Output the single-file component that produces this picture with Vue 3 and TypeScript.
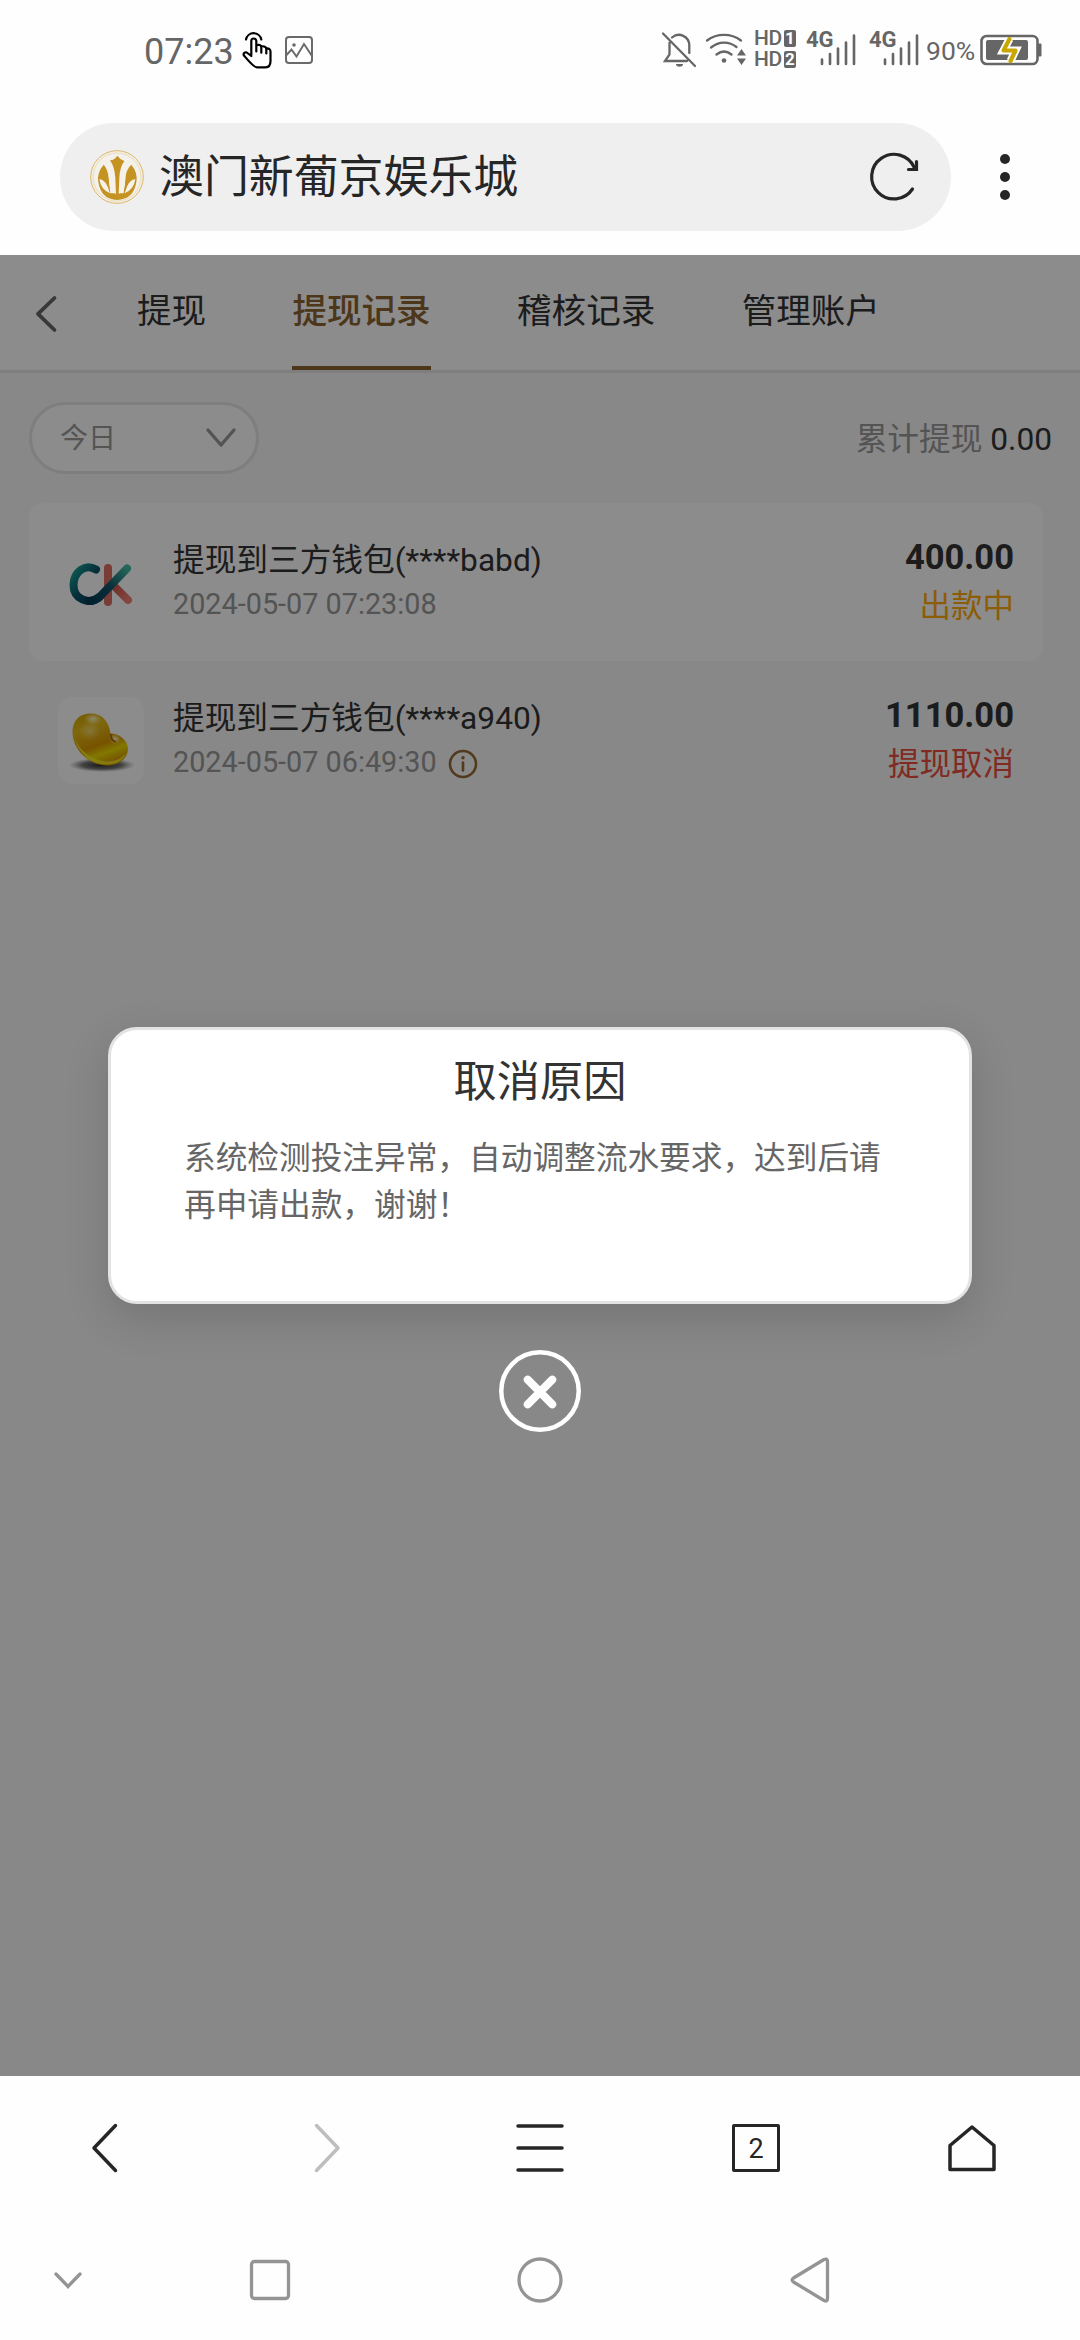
<script setup lang="ts">
interface WithdrawRecord {
  id: number
  icon: 'ck' | 'bean'
  title: string
  time: string
  amount: string
  status: string
  tone: 'pending' | 'cancelled'
  hasReason: boolean
}

const tabs: string[] = ['提现', '提现记录', '稽核记录', '管理账户']
const activeTab = 1

const records: WithdrawRecord[] = [
  { id: 1, icon: 'ck', title: '提现到三方钱包(****babd)', time: '2024-05-07 07:23:08', amount: '400.00', status: '出款中', tone: 'pending', hasReason: false },
  { id: 2, icon: 'bean', title: '提现到三方钱包(****a940)', time: '2024-05-07 06:49:30', amount: '1110.00', status: '提现取消', tone: 'cancelled', hasReason: true },
]
</script>

<template>
  <div class="screen">
    <header class="status-bar">
      <div class="status-left">
        <span class="clock">07:23</span>
        <svg class="hand" width="31" height="38" viewBox="0 0 31 38" fill="none" stroke="#000" stroke-width="2.2" stroke-linejoin="round" stroke-linecap="round">
          <path d="M4 8.5a7.8 7.8 0 0 1 15.3 0" />
          <path d="M9.3 24V10a2.5 2.5 0 0 1 5 0v10.500M14.300 14.200c2.600-1 5 0 5 2v5.500M19.300 15.500c2.600-.8 5 .5 5 2.500v4.500M24.300 17.500c2.800-.3 4.200 1 4.200 3V30c0 4-2 6.300-5 6.300h-8.500C11.500 36.300 7 30.500 1.800 24.300 1 22 3.500 20.300 5.500 22l3.800 3" />
        </svg>
        <svg class="photo" width="30" height="30" viewBox="0 0 30 30" fill="none" stroke="#6a6a6a" stroke-width="2">
          <rect x="2" y="2" width="26" height="26" rx="3" />
          <path d="M2.500 20l5-5.500 5 7 7.500-12.500 8 12" />
          <circle cx="10" cy="10" r="1.800" fill="#6a6a6a" stroke="none" />
        </svg>
      </div>
      <div class="status-right">
        <svg class="bell" width="36" height="38" viewBox="0 0 36 38" fill="none" stroke="#666" stroke-width="2.300" stroke-linecap="round">
          <path d="M2 2.500L34 35M11 6.500c7-6 17.300-1 17.300 8V22M8.500 12v11.500L4 30h22" />
          <path d="M15 33h7a3.500 2.800 0 0 1-7 0z" fill="#666" stroke="none" />
        </svg>
        <svg class="wifi" width="42" height="36" viewBox="0 0 42 36" fill="none" stroke="#666" stroke-width="2.300" stroke-linecap="round">
          <path d="M2 8.500C12 1 26 1 36 8.500M6 15.500c8-6.500 18-6.500 25.500-.5M11.500 22.500c5-4 10-4 15 0" />
          <circle cx="19" cy="28.500" r="2.300" fill="#666" stroke="none" />
          <path d="M32 23.500h9L36.500 17zM32 26.500h9L36.500 33z" fill="#666" stroke="none" />
        </svg>
        <div class="hd">
          <div class="hd-row">HD<b>1</b></div>
          <div class="hd-row">HD<b>2</b></div>
        </div>
        <div v-for="n in 2" :key="n" class="signal">
          <span class="gen">4G</span>
          <svg class="bars" width="37" height="34" viewBox="0 0 37 34" stroke="#666" stroke-width="2.600" stroke-linecap="round">
            <path d="M3 26.500v4.500M11 21v10M19 15.500V31M27 9.500V31M35 2.500V31" />
          </svg>
        </div>
        <span class="percent">90%</span>
        <svg class="battery" width="62" height="32" viewBox="0 0 62 32">
          <rect x="1.500" y="2" width="56" height="28" rx="5" fill="none" stroke="#666" stroke-width="2.600" />
          <path d="M58 9.500h2.500q1 0 1 1v11q0 1-1 1H58z" fill="#666" />
          <rect x="6" y="6" width="42" height="20" rx="2" fill="#666" />
          <path d="M29.500 5L23.500 16.500h12L30.500 27" fill="none" stroke="#fff" stroke-width="8" />
          <path d="M29.500 5L23.500 16.500h12L30.500 27" fill="none" stroke="#c8a800" stroke-width="4.200" stroke-linejoin="round" stroke-linecap="round" />
        </svg>
      </div>
    </header>

    <div class="address-bar">
      <div class="address-field">
        <svg class="site-logo" width="54" height="54" viewBox="150 120 162 162">
          <circle cx="231" cy="201" r="79" fill="#f3efe6" stroke="#ddb96a" stroke-width="3" />
          <circle cx="231" cy="201" r="72" fill="#f4f1ea" stroke="#e6d2a4" stroke-width="2" />
          <path fill="#c49322" d="M191 164q-21 24-16 52 8 52 56 54 50-2 58-54 5-28-15-52-16 14-18 40l-5 46h-40l-5-46q-2-26-15-40z" />
          <path fill="#f6f2ea" d="M178 207q20 0 32 43-28-12-32-43zM286 207q-20 0-32 43 28-12 32-43zM205 172q22 20 25 80-19-2-22-30zM258 172q-22 20-25 80 19-2 22-30z" />
          <path fill="#c49322" d="M210 151q15-2 22-14 8 12 21 16-14 20-15 50l-2 50h-8l-2-50q-2-32-16-52z" />
        </svg>
        <span class="site-name">澳门新葡京娱乐城</span>
        <svg class="reload" width="54" height="54" viewBox="0 0 54 54" fill="none" stroke="#262626" stroke-width="3.200" stroke-linecap="round">
          <path d="M45.500 39a22.300 22.300 0 1 1 1.800-21.500" />
          <path d="M49.500 11.500v8h-8" stroke-width="3.200" />
        </svg>
      </div>
      <svg class="kebab" width="12" height="50" viewBox="0 0 12 50" fill="#262626">
        <circle cx="6" cy="7" r="5" /><circle cx="6" cy="25" r="5" /><circle cx="6" cy="43" r="5" />
      </svg>
    </div>

    <main class="page">
      <nav class="tab-bar">
        <svg class="back" width="24" height="38" viewBox="0 0 24 38" fill="none" stroke="#666" stroke-width="3.800" stroke-linecap="round" stroke-linejoin="round">
          <path d="M20.500 3L4 18.800 20.500 35" />
        </svg>
        <span v-for="(tab, i) in tabs" :key="tab" class="tab" :class="{ active: i === activeTab }">{{ tab }}</span>
      </nav>

      <section class="filters">
        <div class="select">
          <span>今日</span>
          <svg width="32" height="22" viewBox="0 0 32 22" fill="none" stroke="#999" stroke-width="3.400" stroke-linecap="round" stroke-linejoin="round">
            <path d="M3 3l13 15L29 3" />
          </svg>
        </div>
        <div class="total"><span>累计提现</span> 0.00</div>
      </section>

      <ul class="records">
        <li v-for="record in records" :key="record.id" class="record">
          <div class="record-icon">
            <svg v-if="record.icon === 'ck'" width="86" height="87" viewBox="0 0 86 87" fill="none" stroke-linecap="round">
              <defs>
                <linearGradient id="ckC" x1="0" y1="0" x2="1" y2="1">
                  <stop offset="0" stop-color="#17a596" /><stop offset=".5" stop-color="#0b5267" /><stop offset="1" stop-color="#053e59" />
                </linearGradient>
                <linearGradient id="ckStroke" x1="1" y1="0" x2="0" y2="1">
                  <stop offset="0" stop-color="#42bba5" /><stop offset=".5" stop-color="#14566a" /><stop offset="1" stop-color="#043b55" />
                </linearGradient>
                <linearGradient id="ckLeg" x1="0" y1="0" x2="1" y2="1">
                  <stop offset="0" stop-color="#c7544b" /><stop offset="1" stop-color="#ef8175" />
                </linearGradient>
              </defs>
              <path d="M50 29v34" stroke="#df6d65" stroke-width="8" />
              <path d="M55 46l15 15" stroke="url(#ckLeg)" stroke-width="8" />
              <path d="M38 30.500C27 24 15.500 33 15.500 46c0 14 15 20.500 26 12" stroke="url(#ckC)" stroke-width="8" />
              <path d="M69 29.500L43 56.500q-5 5.500-12 5.500" stroke="url(#ckStroke)" stroke-width="8" />
            </svg>
            <svg v-else width="86" height="87" viewBox="0 0 86 87">
              <defs>
                <linearGradient id="bean" x1=".1" y1="0" x2=".5" y2="1">
                  <stop offset="0" stop-color="#d6a500" /><stop offset=".3" stop-color="#e6bd1b" /><stop offset=".65" stop-color="#d99700" /><stop offset=".82" stop-color="#eddc00" /><stop offset="1" stop-color="#d89d00" />
                </linearGradient>
                <radialGradient id="beanGlow"><stop offset="0" stop-color="#fff8ce" /><stop offset="1" stop-color="#fff0a0" stop-opacity="0" /></radialGradient>
                <radialGradient id="beanShadow"><stop offset="0" stop-color="#111" stop-opacity=".9" /><stop offset=".6" stop-color="#333" stop-opacity=".65" /><stop offset="1" stop-color="#666" stop-opacity="0" /></radialGradient>
              </defs>
              <ellipse cx="44" cy="68" rx="33" ry="7" fill="url(#beanShadow)" />
              <path d="M31 16.500c12-1 20 7 21.500 20 8 0 17 6 17.500 15C70 62 60 68.500 49 68.500 28 68 14 50 14.500 34 15 23 22 17 31 16.500z" fill="url(#bean)" />
              <path d="M16.500 40C21 55 37 64.500 50 64.500c8 0 15-4 18-9-2 8-9 12-19 12C32 67 19 55 16.500 40z" fill="#f7ee22" opacity=".8" />
              <ellipse cx="32" cy="34" rx="11" ry="10" fill="url(#beanGlow)" opacity=".45" />
              <ellipse cx="35" cy="22" rx="9" ry="6" fill="url(#beanGlow)" />
              <ellipse cx="57" cy="42" rx="6" ry="5" fill="url(#beanGlow)" />
              <path d="M53 37q-1 6 5 8" stroke="#b16600" stroke-width="1.500" fill="none" />
            </svg>
          </div>
          <div class="record-info">
            <div class="record-title">{{ record.title }}</div>
            <div class="record-time">
              <span>{{ record.time }}</span>
              <svg v-if="record.hasReason" width="30" height="30" viewBox="0 0 30 30" fill="none" stroke="#956c34" stroke-width="2.600">
                <circle cx="15" cy="15" r="13" />
                <path d="M15 13.500v8" stroke-linecap="round" />
                <circle cx="15" cy="8.800" r="1.700" fill="#956c34" stroke="none" />
              </svg>
            </div>
          </div>
          <div class="record-result">
            <div class="amount">{{ record.amount }}</div>
            <div class="state" :class="record.tone">{{ record.status }}</div>
          </div>
        </li>
      </ul>

      <div class="overlay">
        <div class="dialog">
          <h2>取消原因</h2>
          <p>系统检测投注异常，自动调整流水要求，达到后请再申请出款，谢谢！</p>
        </div>
        <svg class="close" width="84" height="84" viewBox="0 0 84 84" fill="none" stroke="#fff" stroke-linecap="round">
          <circle cx="42" cy="42" r="38.700" stroke-width="4.500" />
          <path d="M29.700 30.700l24.600 24.600M54.300 30.700L29.700 55.300" stroke-width="8" />
        </svg>
      </div>
    </main>

    <nav class="browser-bar">
      <div class="cell">
        <svg width="50" height="50" viewBox="0 0 50 50"><path d="M32.500 2.500L11 25l21.500 22.500" /></svg>
      </div>
      <div class="cell disabled">
        <svg width="50" height="50" viewBox="0 0 50 50"><path d="M17.500 2.500L39 25 17.500 47.500" /></svg>
      </div>
      <div class="cell">
        <svg width="50" height="50" viewBox="0 0 50 50"><path d="M3 3h44M3 25h44M3 47h44" /></svg>
      </div>
      <div class="cell"><span class="tab-count">2</span></div>
      <div class="cell">
        <svg width="50" height="50" viewBox="0 0 50 50"><path d="M3 46.500V22.500L25 4l22 18.500v24z" /></svg>
      </div>
    </nav>

    <nav class="system-bar">
      <svg class="hide" width="32" height="48" viewBox="0 0 32 48"><path d="M4 18l12 12.500L28 18" stroke-linecap="round" /></svg>
      <svg class="recent" width="48" height="48" viewBox="0 0 48 48"><rect x="5.500" y="5.500" width="37" height="37" rx="3" /></svg>
      <svg class="home" width="48" height="48" viewBox="0 0 48 48"><circle cx="24" cy="24" r="21" /></svg>
      <svg class="return" width="48" height="48" viewBox="0 0 48 48"><path d="M38 3.500L7.500 22q-2.800 2 0 4L38 44.500q3.500 1.500 3.500-2v-37q0-3.500-3.500-2z" /></svg>
    </nav>
  </div>
</template>

<style>
body {
  margin: 0;
  background: #fff;
}
</style>

<style scoped>
.screen {
  display: flex;
  flex-direction: column;
  width: 1080px;
  height: 2340px;
  overflow: hidden;
  background: #fefefe;
  font-family: Roboto, "Noto Sans CJK SC", sans-serif;
}

svg {
  display: block;
  flex: none;
}

.status-bar {
  display: flex;
  justify-content: space-between;
  box-sizing: border-box;
  height: 102px;
  padding: 0 38px 2px 144px;
  color: #666;
}

.status-left,
.status-right {
  display: flex;
  align-items: center;
}

.clock {
  width: 91px;
  font-size: 36px;
  line-height: 42px;
  margin-top: 4px;
}

.hand {
  margin-left: 7px;
}

.photo {
  margin-left: 11px;
}

.wifi {
  margin-left: 8px;
}

.hd {
  display: flex;
  flex-direction: column;
  gap: 4px;
  width: 42px;
  margin-top: -2px;
  margin-left: 7px;
}

.hd-row {
  display: flex;
  justify-content: space-between;
  align-items: center;
  height: 17px;
  font-size: 21px;
  font-weight: 500;
  line-height: 17px;
  letter-spacing: -0.500px;
}

.hd-row b {
  width: 12px;
  border-radius: 2px;
  background: #666;
  color: #fff;
  font-size: 17px;
  letter-spacing: 0;
  text-align: center;
}

.signal {
  display: flex;
  align-items: flex-start;
  width: 50px;
  margin-left: 10px;
}

.signal + .signal {
  margin-left: 13px;
}

.gen {
  width: 27px;
  margin-top: -1px;
  margin-right: -14px;
  font-size: 22px;
  font-weight: 700;
  line-height: 16px;
}

.percent {
  width: 48px;
  margin-left: 7px;
  margin-top: 2px;
  font-size: 26.500px;
  line-height: 32px;
}

.battery {
  margin-left: 6px;
}

.address-bar {
  display: flex;
  align-items: center;
  box-sizing: border-box;
  height: 153px;
  padding: 0 69px 3px 60px;
  justify-content: space-between;
}

.address-field {
  display: flex;
  align-items: center;
  box-sizing: border-box;
  width: 891px;
  height: 108px;
  padding: 0 30px;
  border-radius: 54px;
  background: #efefef;
}

.site-name {
  flex: 1;
  margin-top: 2px;
  margin-left: 15px;
  color: #262626;
  font-size: 44.900px;
  line-height: 60px;
}

.page {
  position: relative;
  height: 1821px;
  background: #f7f7f7;
  color: #333;
}

.tab-bar {
  display: flex;
  align-items: flex-start;
  box-sizing: border-box;
  height: 118px;
  border-bottom: 3px solid #e6e6e6;
  background: #fff;
}

.back {
  margin: 40px 79px 0 34px;
}

.tab {
  box-sizing: border-box;
  height: 115px;
  margin-right: 86.400px;
  padding-top: 31px;
  border-bottom: 4px solid transparent;
  font-size: 34.560px;
  line-height: 50px;
  white-space: nowrap;
}

.tab.active {
  border-color: #8c6530;
  color: #8c6530;
  font-weight: 500;
}

.filters {
  display: flex;
  align-items: center;
  justify-content: space-between;
  padding: 29px 28px 29px 29px;
}

.select {
  display: flex;
  align-items: center;
  justify-content: space-between;
  box-sizing: border-box;
  width: 230px;
  height: 72px;
  padding: 0 19px 0 28px;
  border: 3px solid #e6e6e6;
  border-radius: 36px;
  background: #fff;
  color: #999;
  font-size: 28.080px;
}

.select span {
  padding-bottom: 5px;
}

.total {
  padding-top: 4px;
  font-size: 31.680px;
  line-height: 40px;
}

.total span {
  color: #999;
}

.records {
  width: 1014px;
  margin: 0 0 0 29px;
  padding: 0;
  list-style: none;
}

.record {
  display: flex;
  box-sizing: border-box;
  height: 158px;
  padding: 36px 29px 0;
  border-radius: 14px;
}

.record:first-child {
  background: #fff;
}

.record-icon {
  width: 86px;
  height: 87px;
  border-radius: 14px;
  background: #fff;
}

.record-info {
  flex: 1;
  margin-top: 1px;
  margin-left: 29px;
}

.record-title {
  font-size: 31.680px;
  line-height: 42px;
}

.record-time {
  display: flex;
  align-items: center;
  gap: 11px;
  height: 44px;
  color: #999;
  font-size: 28.800px;
  line-height: 44px;
}

.record-time svg {
  margin-top: 3px;
}

.record-result {
  text-align: right;
}

.amount {
  margin-top: -2px;
  font-size: 34.560px;
  font-weight: 700;
  line-height: 40px;
}

.state {
  margin-top: 4px;
  font-size: 31.500px;
  line-height: 52px;
}

.pending {
  color: #ffaa09;
}

.cancelled {
  color: #ea4e3d;
}

.overlay {
  position: absolute;
  inset: 0;
  display: flex;
  flex-direction: column;
  align-items: center;
  box-sizing: border-box;
  padding-top: 772px;
  background: rgba(0, 0, 0, 0.45);
}

.dialog {
  box-sizing: border-box;
  width: 864px;
  height: 277px;
  padding: 21px 73px 0;
  border: 3px solid #e3e3e3;
  border-radius: 29px;
  background: #fff;
  box-shadow: 0 14px 44px rgba(0, 0, 0, 0.15);
}

.dialog h2 {
  margin: 0;
  color: #333;
  font-size: 43.200px;
  font-weight: 400;
  line-height: 64px;
  text-align: center;
}

.dialog p {
  margin: 20px 0 0;
  color: #666;
  font-size: 31.680px;
  line-height: 47px;
}

.close {
  margin-top: 45px;
}

.browser-bar {
  display: flex;
  align-items: center;
  height: 144px;
}

.cell {
  display: flex;
  justify-content: center;
  width: 216px;
}

.cell svg {
  fill: none;
  stroke: #262626;
  stroke-width: 3.500;
  stroke-linecap: round;
  stroke-linejoin: round;
}

.cell.disabled svg {
  stroke: #bebebe;
}

.tab-count {
  box-sizing: border-box;
  width: 48px;
  height: 48px;
  border: 3.500px solid #262626;
  border-radius: 2px;
  color: #262626;
  font-size: 27px;
  line-height: 44px;
  text-align: center;
}

.system-bar {
  display: flex;
  align-items: center;
  height: 120px;
}

.system-bar svg {
  fill: none;
  stroke: #949494;
  stroke-width: 3.300;
}

.hide {
  margin-left: 52px;
}

.recent {
  margin-left: 162px;
}

.home {
  margin-left: 222px;
}

.return {
  margin-left: 222px;
}
</style>
